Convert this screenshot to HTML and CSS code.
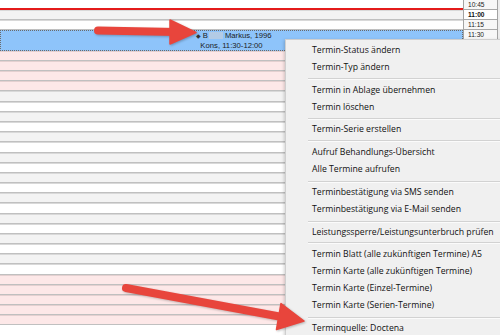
FILE: index.html
```html
<!DOCTYPE html>
<html lang="de">
<head>
<meta charset="utf-8">
<link rel="stylesheet" href="styles.css">
</head>
<body>
<div class="page">
  <div class="grid">
    <div class="row first"><div class="slot red"></div><div class="time">10:45</div><div class="edge"></div></div>
    <div class="row"><div class="slot gray"></div><div class="time bold">11:00</div><div class="edge"></div></div>
    <div class="row"><div class="slot"></div><div class="time">11:15</div><div class="edge"></div></div>
    <div class="row appt-row">
      <div class="slot appt">
        <div class="appt-line"><span class="dia">◆</span> B<span class="redact"></span> Markus, 1996</div>
        <div class="appt-line">Kons, 11:30-12:00</div>
      </div>
      <div class="time-col"><div class="time">11:30</div><div class="time"></div></div>
      <div class="edge"></div>
    </div>
    <div class="row"><div class="slot pink"></div><div class="time"></div><div class="edge"></div></div>
    <div class="row"><div class="slot pink"></div><div class="time"></div><div class="edge"></div></div>
    <div class="row"><div class="slot pink"></div><div class="time"></div><div class="edge"></div></div>
    <div class="row"><div class="slot pink"></div><div class="time"></div><div class="edge"></div></div>
    <div class="row"><div class="slot gray"></div><div class="time"></div><div class="edge"></div></div>
    <div class="row"><div class="slot"></div><div class="time"></div><div class="edge"></div></div>
    <div class="row"><div class="slot gray"></div><div class="time"></div><div class="edge"></div></div>
    <div class="row"><div class="slot"></div><div class="time"></div><div class="edge"></div></div>
    <div class="row"><div class="slot gray"></div><div class="time"></div><div class="edge"></div></div>
    <div class="row"><div class="slot"></div><div class="time"></div><div class="edge"></div></div>
    <div class="row"><div class="slot gray"></div><div class="time"></div><div class="edge"></div></div>
    <div class="row"><div class="slot"></div><div class="time"></div><div class="edge"></div></div>
    <div class="row"><div class="slot gray"></div><div class="time"></div><div class="edge"></div></div>
    <div class="row"><div class="slot"></div><div class="time"></div><div class="edge"></div></div>
    <div class="row"><div class="slot gray"></div><div class="time"></div><div class="edge"></div></div>
    <div class="row"><div class="slot"></div><div class="time"></div><div class="edge"></div></div>
    <div class="row"><div class="slot gray"></div><div class="time"></div><div class="edge"></div></div>
    <div class="row"><div class="slot"></div><div class="time"></div><div class="edge"></div></div>
    <div class="row"><div class="slot gray"></div><div class="time"></div><div class="edge"></div></div>
    <div class="row"><div class="slot"></div><div class="time"></div><div class="edge"></div></div>
    <div class="row"><div class="slot gray"></div><div class="time"></div><div class="edge"></div></div>
    <div class="row"><div class="slot"></div><div class="time"></div><div class="edge"></div></div>
    <div class="row"><div class="slot pink"></div><div class="time"></div><div class="edge"></div></div>
    <div class="row"><div class="slot pink"></div><div class="time"></div><div class="edge"></div></div>
    <div class="row"><div class="slot pink"></div><div class="time"></div><div class="edge"></div></div>
    <div class="row"><div class="slot pink"></div><div class="time"></div><div class="edge"></div></div>
    <div class="row"><div class="slot pink"></div><div class="time"></div><div class="edge"></div></div>
  </div>

  <div class="menu">
    <div class="item">Termin-Status ändern</div>
    <div class="item">Termin-Typ ändern</div>
    <div class="sep"></div>
    <div class="item">Termin in Ablage übernehmen</div>
    <div class="item">Termin löschen</div>
    <div class="sep"></div>
    <div class="item">Termin-Serie erstellen</div>
    <div class="sep"></div>
    <div class="item">Aufruf Behandlungs-Übersicht</div>
    <div class="item">Alle Termine aufrufen</div>
    <div class="sep"></div>
    <div class="item">Terminbestätigung via SMS senden</div>
    <div class="item">Terminbestätigung via E-Mail senden</div>
    <div class="sep"></div>
    <div class="item">Leistungssperre/Leistungsunterbruch prüfen</div>
    <div class="sep"></div>
    <div class="item">Termin Blatt (alle zukünftigen Termine) A5</div>
    <div class="item">Termin Karte (alle zukünftigen Termine)</div>
    <div class="item">Termin Karte (Einzel-Termine)</div>
    <div class="item">Termin Karte (Serien-Termine)</div>
    <div class="sep"></div>
    <div class="item">Terminquelle: Doctena</div>
  </div>

  <svg class="arrows" width="500" height="335" viewBox="0 0 500 335">
    <line x1="98" y1="30.5" x2="176" y2="32" stroke="#e8453c" stroke-width="8" stroke-linecap="round"/>
    <polygon points="170,20 196,32.5 170,44" fill="#e8453c" stroke="#e8453c" stroke-width="1.5" stroke-linejoin="round"/>
    <line x1="126" y1="288" x2="282" y2="317" stroke="#e8453c" stroke-width="8" stroke-linecap="round"/>
    <polygon points="281,303.5 304,321 276.5,329.5" fill="#e8453c" stroke="#e8453c" stroke-width="1.5" stroke-linejoin="round"/>
  </svg>
</div>
</body>
</html>
```

FILE: styles.css
```css
html, body {
  margin: 0;
  padding: 0;
  background: #ffffff;
}

.page {
  position: relative;
  width: 500px;
  height: 335px;
  overflow: hidden;
  font-family: "Liberation Sans", Arial, sans-serif;
}

.grid {
  display: flex;
  flex-direction: column;
}

.row {
  display: flex;
  height: 10.18px;
  flex: none;
}

.row.first {
  height: 10.1px;
}

.row.appt-row {
  height: 20.36px;
}

.slot {
  width: 463px;
  flex: none;
  box-sizing: border-box;
  background: #ffffff;
  border-bottom: 1px solid #c0c0c0;
  box-shadow: inset 0 1px 0 #d9d9d9;
}

.slot.gray { background: #f3f3f3; }
.slot.pink { background: #fde8e8; box-shadow: inset 0 1px 0 #e4d0d0; }

.slot.red {
  border-bottom: 2px solid #e41b1b;
  box-shadow: none;
}

.slot.appt {
  background: #8ec4fa;
  border: 1px dotted #6a6a6a;
  box-shadow: none;
  display: flex;
  flex-direction: column;
  align-items: center;
  padding-top: 0;
}

.appt-line {
  font-size: 7.7px;
  line-height: 9px;
  color: #1c1c1c;
  white-space: nowrap;
}

.appt-line:first-child {
  margin-top: -0.5px;
  padding-left: 4px;
}

.dia {
  font-size: 6px;
  color: #333;
}

.redact {
  display: inline-block;
  width: 14px;
  height: 7px;
  margin-left: 1px;
  background: #b3cbe5;
  vertical-align: -1px;
}

.time-col {
  display: flex;
  flex-direction: column;
  width: 34px;
  flex: none;
}

.time-col .time {
  height: 10.18px;
}

.time {
  width: 34px;
  flex: none;
  box-sizing: border-box;
  border-left: 1px solid #a3a3a3;
  border-bottom: 1px solid #a8a8a8;
  background: #f7f7f7;
  font-size: 6.6px;
  line-height: 9px;
  padding-left: 4px;
  color: #222;
}

.time.bold {
  font-weight: bold;
  background: #ffffff;
  color: #111;
}

.edge {
  width: 3px;
  flex: none;
  box-sizing: border-box;
  border-left: 1px solid #a3a3a3;
  background: #ececec;
}

.menu {
  position: absolute;
  left: 285px;
  top: 39px;
  width: 225px;
  height: 310px;
  box-sizing: border-box;
  background: #f0f0f0;
  border: 1px solid #cfcfcf;
  box-shadow: -1px 1px 3px rgba(0, 0, 0, 0.18);
  padding-top: 2px;
  display: flex;
  flex-direction: column;
  font-family: "Open Sans", "Noto Sans", sans-serif;
}

.item {
  height: 16.85px;
  line-height: 16.85px;
  padding-left: 26px;
  font-size: 8.7px;
  color: #111;
  white-space: nowrap;
  flex: none;
}

.sep {
  height: 6px;
  flex: none;
  margin-left: 22px;
  background: linear-gradient(#f0f0f0 0, #f0f0f0 2.5px, #d2d2d2 2.5px, #d2d2d2 3.5px, #fbfbfb 3.5px, #fbfbfb 4.5px, #f0f0f0 4.5px);
}

.arrows {
  position: absolute;
  left: 0;
  top: 0;
  pointer-events: none;
  filter: drop-shadow(1px 1px 1px rgba(0, 0, 0, 0.25));
}
```
